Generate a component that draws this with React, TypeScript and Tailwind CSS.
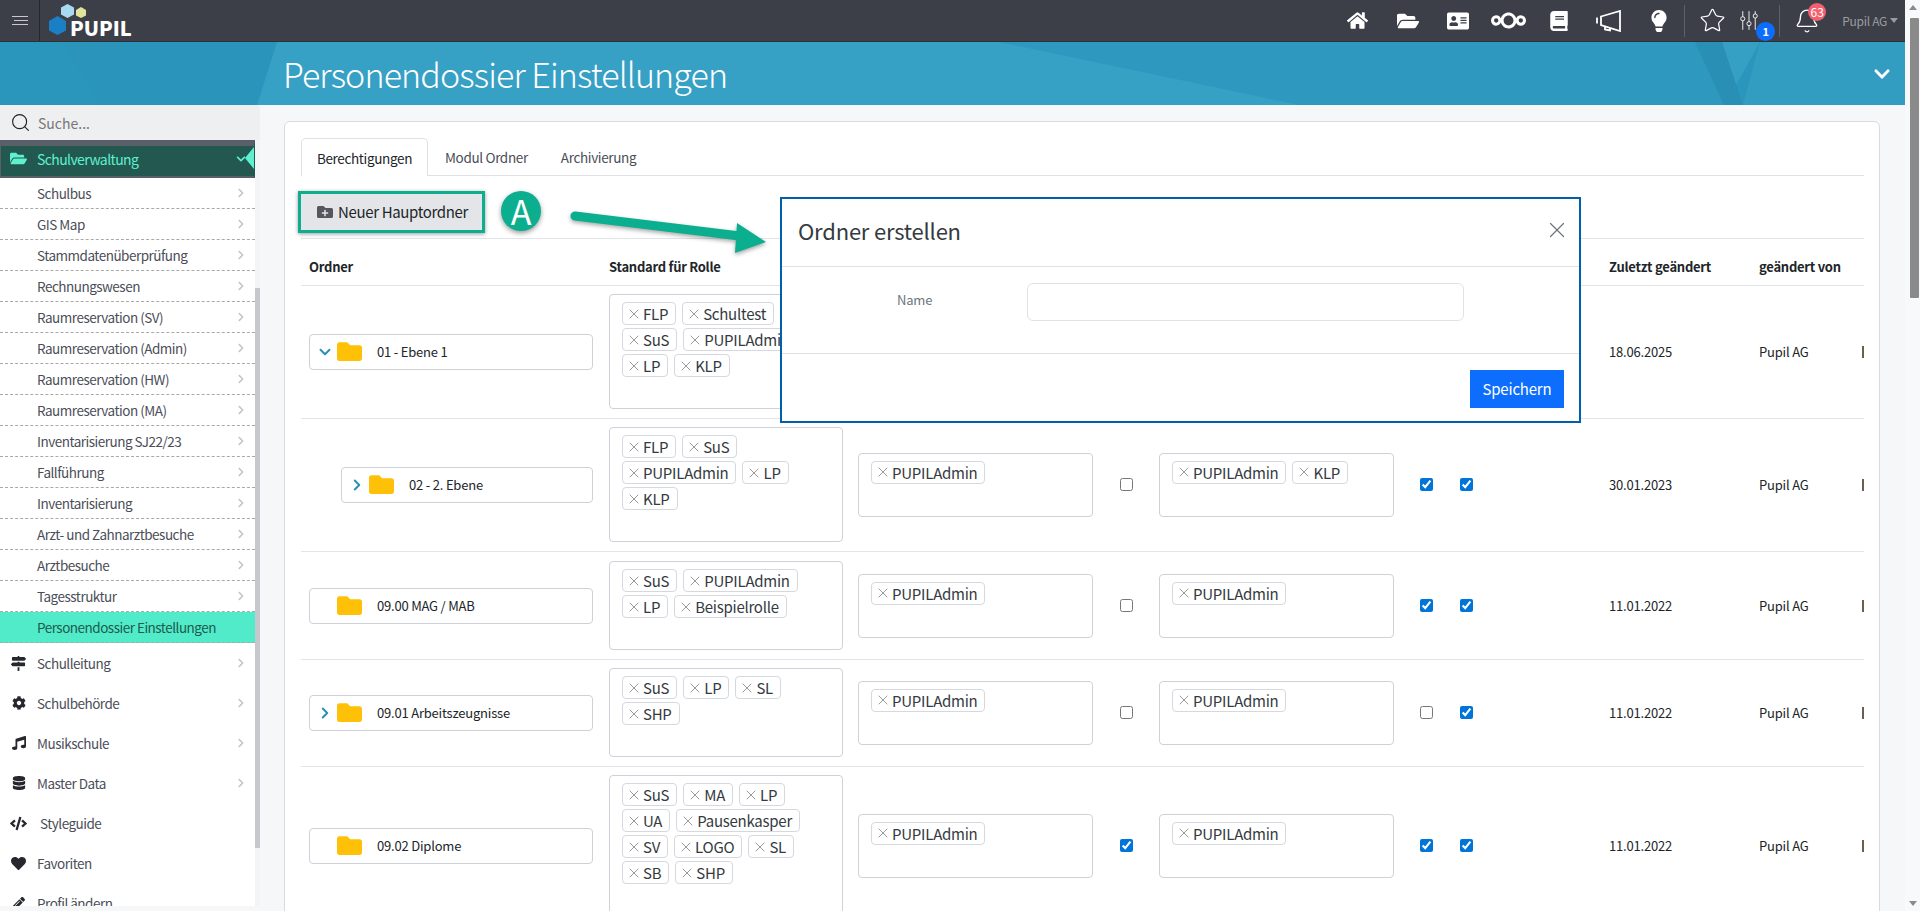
import { Bell, ChevronDown, ChevronRight, Search, Star, X } from "lucide-react";
import {
  FaAddressCard,
  FaBook,
  FaChevronDown,
  FaChevronRight,
  FaCode,
  FaCog,
  FaDatabase,
  FaFolder,
  FaFolderOpen,
  FaFolderPlus,
  FaHeart,
  FaHome,
  FaLightbulb,
  FaMapSigns,
  FaMusic,
  FaPencilAlt,
} from "react-icons/fa";
import { SiNextcloud } from "react-icons/si";

const subItems = [
  "Schulbus",
  "GIS Map",
  "Stammdatenüberprüfung",
  "Rechnungswesen",
  "Raumreservation (SV)",
  "Raumreservation (Admin)",
  "Raumreservation (HW)",
  "Raumreservation (MA)",
  "Inventarisierung SJ22/23",
  "Fallführung",
  "Inventarisierung",
  "Arzt- und Zahnarztbesuche",
  "Arztbesuche",
  "Tagesstruktur",
];

const mainItems = [
  { label: "Schulleitung", icon: <FaMapSigns size={15} />, more: true },
  { label: "Schulbehörde", icon: <FaCog size={14} />, more: true },
  { label: "Musikschule", icon: <FaMusic size={14} />, more: true },
  { label: "Master Data", icon: <FaDatabase size={14} />, more: true },
  { label: "Styleguide", icon: <FaCode size={17} />, more: false },
  { label: "Favoriten", icon: <FaHeart size={15} />, more: false },
  { label: "Profil ändern", icon: <FaPencilAlt size={13} />, more: false },
];

type Row = {
  name: string;
  indent?: boolean;
  arrow?: "down" | "right";
  tall?: boolean;
  roles: string[];
  admin: string[];
  third: string[];
  c1: boolean;
  c2: boolean;
  c3: boolean;
  date: string;
};

const rows: Row[] = [
  {
    name: "01 - Ebene 1",
    arrow: "down",
    roles: ["FLP", "Schultest", "SuS", "PUPILAdmin", "LP", "KLP"],
    admin: ["PUPILAdmin"],
    third: ["PUPILAdmin"],
    c1: false,
    c2: true,
    c3: true,
    date: "18.06.2025",
  },
  {
    name: "02 - 2. Ebene",
    indent: true,
    arrow: "right",
    roles: ["FLP", "SuS", "PUPILAdmin", "LP", "KLP"],
    admin: ["PUPILAdmin"],
    third: ["PUPILAdmin", "KLP"],
    c1: false,
    c2: true,
    c3: true,
    date: "30.01.2023",
  },
  {
    name: "09.00 MAG / MAB",
    tall: true,
    roles: ["SuS", "PUPILAdmin", "LP", "Beispielrolle"],
    admin: ["PUPILAdmin"],
    third: ["PUPILAdmin"],
    c1: false,
    c2: true,
    c3: true,
    date: "11.01.2022",
  },
  {
    name: "09.01 Arbeitszeugnisse",
    arrow: "right",
    roles: ["SuS", "LP", "SL", "SHP"],
    admin: ["PUPILAdmin"],
    third: ["PUPILAdmin"],
    c1: false,
    c2: false,
    c3: true,
    date: "11.01.2022",
  },
  {
    name: "09.02 Diplome",
    roles: ["SuS", "MA", "LP", "UA", "Pausenkasper", "SV", "LOGO", "SL", "SB", "SHP"],
    admin: ["PUPILAdmin"],
    third: ["PUPILAdmin"],
    c1: true,
    c2: true,
    c3: true,
    date: "11.01.2022",
  },
];

function Tag({ label }: { label: string }) {
  return (
    <span className="flex h-[23px] items-center gap-[1px] rounded-[4px] border border-[#d5d8de] pl-[3px] pr-[7px] text-[15px] leading-[21px] tracking-[-0.25px] text-[#343a40]">
      <X size={16} strokeWidth={0.9} className="shrink-0 text-[#555]" />
      {label}
    </span>
  );
}

function TagBox({ tags, wide }: { tags: string[]; wide?: boolean }) {
  return (
    <div
      className={
        wide
          ? "flex w-[234px] flex-wrap content-start gap-x-[6px] gap-y-[3px] self-stretch rounded-[4px] border border-[#ced1d8] pb-[31px] pl-[12px] pr-[12px] pt-[7px]"
          : "flex h-[64px] w-[235px] flex-wrap content-start gap-x-[6px] gap-y-[3px] rounded-[4px] border border-[#ced1d8] pl-[12px] pr-[8px] pt-[7px]"
      }
    >
      {tags.map((t) => (
        <Tag key={t} label={t} />
      ))}
    </div>
  );
}

function Check({ checked }: { checked: boolean }) {
  return <input type="checkbox" defaultChecked={checked} className="h-[13px] w-[13px] accent-[#0075d9]" />;
}

function TableRow({ row }: { row: Row }) {
  return (
    <div
      className={
        (row.tall ? "pt-[9px] " : "pt-[8px] ") +
        "flex items-center border-b border-[#e2e4e8] pb-[9px] text-[13px] tracking-[-0.2px] text-[#212529]"
      }
    >
      <div className="w-[300px] pl-[8px]">
        <div
          className={
            (row.indent ? "ml-[32px] w-[252px]" : "w-[284px]") +
            " flex h-[36px] items-center rounded-[4px] border border-[#ced1d8] pl-[3px]"
          }
        >
          <span className="flex w-[24px] justify-center text-[#2a90b8]">
            {row.arrow === "down" && <ChevronDown size={18} strokeWidth={2.6} />}
            {row.arrow === "right" && <ChevronRight size={18} strokeWidth={2.6} />}
          </span>
          <FaFolder size={25} className="text-[#ffc107]" />
          <span className="ml-[15px] leading-[18px]">{row.name}</span>
        </div>
      </div>
      <div className="w-[250px] pl-[8px]">
        <TagBox tags={row.roles} wide />
      </div>
      <div className="w-[251px] pl-[7px]">
        <TagBox tags={row.admin} />
      </div>
      <div className="flex w-[57px] justify-center pr-[8px]">
        <Check checked={row.c1} />
      </div>
      <div className="w-[261px]">
        <TagBox tags={row.third} />
      </div>
      <div className="flex w-[40px]">
        <Check checked={row.c2} />
      </div>
      <div className="flex w-[149px]">
        <Check checked={row.c3} />
      </div>
      <div className="w-[150px] leading-[18px]">{row.date}</div>
      <div className="w-[103px] leading-[18px]">Pupil AG</div>
      <div className="h-[12px] w-[2px] bg-[#6b5f4f]" />
    </div>
  );
}

function Sliders() {
  return (
    <svg width="26" height="27" viewBox="0 0 26 27" fill="none" stroke="#fff" strokeWidth="1.3">
      <path d="M4 0v8M4 14v13M13 0v15M13 21v6M22 0v4M22 10v17" />
      <circle cx="4" cy="11" r="3" />
      <circle cx="13" cy="18" r="3" />
      <circle cx="22" cy="7" r="3" />
    </svg>
  );
}

function Megaphone() {
  return (
    <svg width="26" height="22" viewBox="0 0 26 22" fill="none" stroke="#fff" strokeWidth="1.8">
      <path d="M1 7.5v6M5 6.5l19-5.5v20L5 15zM9 16.5v3l5 1v-3" />
    </svg>
  );
}

function TopBar() {
  return (
    <header className="flex h-[42px] items-center border-b border-[#2e3037] bg-[#3c3f48] pr-[7px]">
      <div className="flex h-full w-[40px] items-center justify-center border-r border-[#26282e]">
        <div className="flex w-[16px] flex-col gap-[3px]">
          <span className="h-px w-full bg-[#c8c9cc]" />
          <span className="ml-[2px] h-px w-[14px] bg-[#c8c9cc]" />
          <span className="h-px w-full bg-[#c8c9cc]" />
        </div>
      </div>
      <div className="relative ml-[9px] h-full w-[84px]">
        <svg width="40" height="36" viewBox="0 0 40 36" className="absolute left-0 top-[3px]">
          <polygon points="8.5,13 17,18 17,27.5 8.5,32 0,27.5 0,18" fill="#1b7fc6" />
          <polygon points="18.5,1 25,4.5 25,11.5 18.5,15 12,11.5 12,4.5" fill="#a9d9f1" />
          <polygon points="32,4 37,7 37,12.5 32,15 27,12.5 27,7" fill="#dfe39b" />
        </svg>
        <span className="absolute left-[21px] top-[17px] text-[20px] font-black leading-[21px] text-white">PUPIL</span>
      </div>
      <div className="ml-auto flex items-center text-white">
        <span className="flex w-[50px] justify-center">
          <FaHome size={21} />
        </span>
        <span className="flex w-[51px] justify-center">
          <FaFolderOpen size={22} />
        </span>
        <span className="flex w-[50px] justify-center">
          <FaAddressCard size={22} />
        </span>
        <span className="flex w-[50px] justify-center">
          <SiNextcloud size={35} />
        </span>
        <span className="flex w-[51px] justify-center">
          <FaBook size={20} />
        </span>
        <span className="flex w-[50px] justify-center">
          <Megaphone />
        </span>
        <span className="flex w-[50px] justify-center">
          <FaLightbulb size={22} />
        </span>
        <span className="h-[32px] w-px bg-[#5d6068]" />
        <span className="flex w-[55px] justify-center">
          <Star size={27} strokeWidth={1.1} />
        </span>
        <span className="relative flex w-[18px] justify-center">
          <Sliders />
          <span className="absolute left-[16px] top-[15px] flex h-[19px] w-[19px] items-center justify-center rounded-full bg-[#0d6efd] text-[11px] font-bold leading-none">
            1
          </span>
        </span>
        <span className="ml-[21px] h-[32px] w-px bg-[#5d6068]" />
        <span className="relative ml-[14px] flex w-[26px] justify-center">
          <Bell size={26} strokeWidth={1.2} />
          <span className="absolute left-[14px] top-[-5px] flex h-[18px] w-[18px] items-center justify-center rounded-full bg-[#f4606f] text-[12px] leading-none">
            63
          </span>
        </span>
        <span className="ml-[22px] flex items-center gap-[3px] text-[12px] leading-[16px] tracking-[-0.3px] text-[#9a9ca2]">
          Pupil AG
          <span className="h-0 w-0 border-x-[4px] border-t-[5px] border-x-transparent border-t-[#9a9ca2]" />
        </span>
      </div>
    </header>
  );
}

function Hero() {
  return (
    <div className="relative flex h-[63px] items-center bg-[#2b96bc] pl-[283px] pr-[14px]">
      <svg width="1905" height="63" viewBox="0 0 1905 63" className="absolute left-0 top-0">
        <polygon points="62,0 277,0 257,63 101,63" fill="#2a94ba" />
        <polygon points="277,0 1000,0 1300,63 257,63" fill="#37a0c5" />
        <polygon points="1000,0 1695,0 1724,63 1300,63" fill="#2f98be" />
        <polygon points="1760,0 1905,0 1905,63 1743,63" fill="#339cc1" />
        <polygon points="1722,0 1760,0 1725,63" fill="#359fc4" />
        <polygon points="1695,0 1722,0 1743,63 1724,63" fill="#2a8fb4" />
      </svg>
      <h1 className="relative text-[34px] font-light leading-[46px] tracking-[-0.9px] text-white">
        Personendossier Einstellungen
      </h1>
      <FaChevronDown size={18} className="relative ml-auto text-white" />
    </div>
  );
}

function Sidebar() {
  return (
    <aside className="flex h-[801px] w-[260px] shrink-0 flex-col overflow-hidden bg-white">
      <div className="flex h-[35px] shrink-0 items-center bg-[#eeeff0] pl-[10px] text-[14px] text-[#777]">
        <Search size={21} strokeWidth={1.3} className="text-[#222]" />
        <span className="ml-[7px] leading-[20px]">Suche...</span>
      </div>
      <div className="flex min-h-0 flex-1">
        <nav className="w-[255px] overflow-hidden text-[13.5px] leading-[20px] tracking-[-0.5px] text-[#4b4e58]">
          <div className="relative flex h-[38px] items-center border-x border-b-2 border-t-[6px] border-x-[#5a6068] border-y-[#5a6068] border-r-transparent bg-[#225850] pb-[5px] pl-[9px] text-[#5ff0cf]">
            <FaFolderOpen size={17} />
            <span className="ml-[10px] text-[14px] tracking-[-0.6px]">Schulverwaltung</span>
            <FaChevronDown size={10} className="absolute left-[235px] top-[8px]" />
            <span className="absolute right-0 top-[1px] h-0 w-0 border-y-[11px] border-r-[9px] border-y-transparent border-r-[#5ff0cf]" />
          </div>
          {subItems.map((s) => (
            <div key={s} className="flex h-[31px] items-center border-b border-dashed border-[#a9a9a9] pl-[37px] pr-[9px]">
              {s}
              <FaChevronRight size={10} className="ml-auto text-[#c4c6c9]" />
            </div>
          ))}
          <div className="flex h-[31px] items-center border-b border-dashed border-[#a9a9a9] bg-[#51ebc9] pl-[37px] text-[#1e5a4e]">
            Personendossier Einstellungen
          </div>
          {mainItems.map((m) => (
            <div key={m.label} className="flex h-[40px] items-center pr-[9px]">
              <span className="flex w-[37px] justify-center text-[#26282d]">{m.icon}</span>
              <span className={m.label === "Styleguide" ? "ml-[3px]" : ""}>{m.label}</span>
              {m.more && <FaChevronRight size={10} className="ml-auto text-[#c4c6c9]" />}
            </div>
          ))}
        </nav>
        <div className="w-[5px] bg-[#f4f4f5] pt-[148px]">
          <div className="h-[560px] bg-[#c5c8cc]" />
        </div>
      </div>
    </aside>
  );
}

function Main() {
  return (
    <main className="min-w-0 flex-1 overflow-hidden pl-[24px] pr-[25px] pt-[16px]">
      <div className="h-[900px] rounded-[6px] border border-[#d9dbde] bg-white pl-[16px] pr-[15px] pt-[16px]">
        <div className="flex h-[38px] border-b border-[#dfe1e5] text-[13.5px] leading-[20px] tracking-[-0.35px] text-[#4a4e57]">
          <div className="flex h-[38px] w-[127px] items-center justify-center rounded-t-[5px] border border-b-0 border-[#dfe1e5] bg-white text-[#212529]">
            Berechtigungen
          </div>
          <div className="flex h-[37px] items-center pl-[17px]">Modul Ordner</div>
          <div className="flex h-[37px] items-center pl-[33px]">Archivierung</div>
        </div>
        <div className="flex h-[63px] items-center border-b border-[#e2e4e8] pt-[9px]">
          <button className="-ml-[3px] flex h-[42px] w-[187px] items-center gap-[5px] whitespace-nowrap border-[3px] border-[#0bae8f] bg-[#e3e5e8] pl-[16px] text-[15px] leading-[20px] tracking-[-0.35px] text-[#212529] shadow-[0_1px_4px_rgba(0,0,0,0.4)]">
            <FaFolderPlus size={16} className="shrink-0 text-[#55575e]" />
            Neuer Hauptordner
          </button>
        </div>
        <div className="flex h-[47px] items-center border-b border-[#e2e4e8] pt-[9px] text-[13px] font-bold leading-[18px] tracking-[-0.25px] text-[#212529]">
          <div className="w-[308px] pl-[8px]">Ordner</div>
          <div className="w-[1000px]">Standard für Rolle</div>
          <div className="w-[150px]">Zuletzt geändert</div>
          <div>geändert von</div>
        </div>
        {rows.map((r) => (
          <TableRow key={r.name} row={r} />
        ))}
      </div>
    </main>
  );
}

function Modal() {
  return (
    <div className="absolute left-[780px] top-[197px] flex h-[226px] w-[801px] flex-col border-[2px] border-[#0060ab] bg-white">
      <div className="flex h-[68px] shrink-0 items-center border-b border-[#dfe1e5] pb-[6px] pl-[16px] pr-[9px]">
        <h2 className="text-[22px] font-normal leading-[28px] tracking-[-0.2px] text-[#343a40]">Ordner erstellen</h2>
        <X size={26} strokeWidth={1.1} className="ml-auto text-[#6c757d]" />
      </div>
      <div className="flex h-[87px] shrink-0 border-b border-[#dfe1e5] pt-[16px]">
        <label className="w-[245px] pl-[115px] pt-[7px] text-[13px] leading-[20px] tracking-[-0.2px] text-[#6c757d]">Name</label>
        <div className="h-[38px] w-[437px] rounded-[6px] border border-[#e0e2e7]" />
      </div>
      <div className="flex justify-end pr-[15px] pt-[16px]">
        <button className="h-[38px] w-[94px] bg-[#0d6efd] text-[15px] leading-[20px] tracking-[-0.2px] text-white">Speichern</button>
      </div>
    </div>
  );
}

function Annotation() {
  return (
    <>
      <div className="absolute left-[501px] top-[191px] flex h-[40px] w-[40px] items-center justify-center rounded-full bg-[#0bae8f] text-[34px] leading-[40px] text-white shadow-[0_2px_5px_rgba(0,0,0,0.4)]">
        A
      </div>
      <svg width="210" height="50" viewBox="0 0 210 50" className="absolute left-[566px] top-[205px] drop-shadow-[0_2px_2px_rgba(0,0,0,0.35)]">
        <path d="M9 11L174 31" stroke="#0bae8f" strokeWidth="9" strokeLinecap="round" />
        <polygon points="171,18 200,37 169,48" fill="#0bae8f" />
      </svg>
    </>
  );
}

function PageScrollbar() {
  return (
    <div className="flex h-[911px] w-[15px] shrink-0 flex-col items-center bg-[#f8f9fa]">
      <span className="mt-[5px] h-0 w-0 border-x-[4px] border-b-[5px] border-x-transparent border-b-[#8a8a8a]" />
      <div className="ml-[3px] mt-[8px] h-[280px] w-[9px] rounded-[1px] bg-[#8a8a8a]" />
      <span className="mb-[5px] mt-auto h-0 w-0 border-x-[4px] border-t-[5px] border-x-transparent border-t-[#8a8a8a]" />
    </div>
  );
}

export default function App() {
  return (
    <div className="relative flex h-[911px] w-[1920px] overflow-hidden bg-[#f6f7f9] font-['Noto_Sans_CJK_SC','Noto_Sans',sans-serif]">
      <div className="flex w-[1905px] shrink-0 flex-col">
        <TopBar />
        <Hero />
        <div className="flex min-h-0 flex-1">
          <Sidebar />
          <Main />
        </div>
      </div>
      <PageScrollbar />
      <Annotation />
      <Modal />
    </div>
  );
}
